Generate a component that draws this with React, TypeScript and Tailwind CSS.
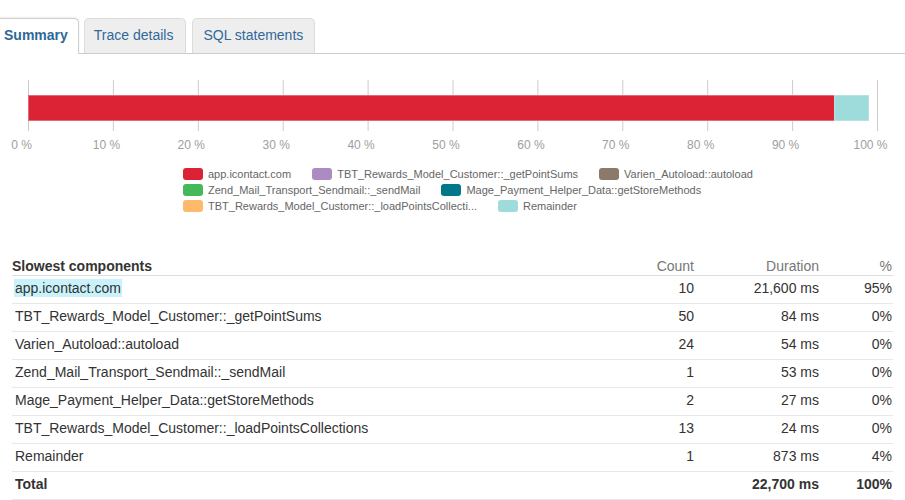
import React from "react";

const ticks = [0, 10, 20, 30, 40, 50, 60, 70, 80, 90, 100];

const legendRows: { color: string; label: string }[][] = [
  [
    { color: "#dc2336", label: "app.icontact.com" },
    { color: "#ab8bc1", label: "TBT_Rewards_Model_Customer::_getPointSums" },
    { color: "#8b7a6a", label: "Varien_Autoload::autoload" },
  ],
  [
    { color: "#45b85a", label: "Zend_Mail_Transport_Sendmail::_sendMail" },
    { color: "#01788a", label: "Mage_Payment_Helper_Data::getStoreMethods" },
  ],
  [
    { color: "#fdb96c", label: "TBT_Rewards_Model_Customer::_loadPointsCollecti..." },
    { color: "#9ddcdb", label: "Remainder" },
  ],
];

const rows = [
  { name: "app.icontact.com", count: "10", dur: "21,600 ms", pct: "95%", hl: true },
  { name: "TBT_Rewards_Model_Customer::_getPointSums", count: "50", dur: "84 ms", pct: "0%" },
  { name: "Varien_Autoload::autoload", count: "24", dur: "54 ms", pct: "0%" },
  { name: "Zend_Mail_Transport_Sendmail::_sendMail", count: "1", dur: "53 ms", pct: "0%" },
  { name: "Mage_Payment_Helper_Data::getStoreMethods", count: "2", dur: "27 ms", pct: "0%" },
  { name: "TBT_Rewards_Model_Customer::_loadPointsCollections", count: "13", dur: "24 ms", pct: "0%" },
  { name: "Remainder", count: "1", dur: "873 ms", pct: "4%" },
];

export default function App() {
  const x0 = 28.5;
  const step = 84.9;
  return (
    <div className="w-[905px] h-[500px] overflow-hidden bg-white font-['Liberation_Sans',Arial,sans-serif] text-[#333]">
      {/* Tabs */}
      <div className="pt-[18px] flex items-end border-b border-[#cccccc] h-[54px]">
        <div className="-mb-px h-[36px] pl-[4px] pr-[10px] pb-[3px] flex items-center bg-white border border-l-0 border-b-0 border-[#cfcfcf] rounded-tr-[5px] shadow-[0_-1px_2px_rgba(0,0,0,0.08)] text-[14px] font-bold text-[#2d6899]">
          Summary
        </div>
        <div className="ml-[5px] h-[35px] pl-[9px] pr-[12px] pb-[2px] flex items-center bg-[#eeeeee] border border-b-0 border-[#dcdcdc] rounded-t-[5px] text-[14px] text-[#30699a]">
          Trace details
        </div>
        <div className="ml-[6px] h-[35px] pl-[10px] pr-[11px] pb-[2px] flex items-center bg-[#eeeeee] border border-b-0 border-[#dcdcdc] rounded-t-[5px] text-[14px] text-[#30699a]">
          SQL statements
        </div>
      </div>

      {/* Chart */}
      <svg width="905" height="106" className="block">
        {ticks.map((t, i) => (
          <line
            key={t}
            x1={x0 + step * i}
            x2={x0 + step * i}
            y1={26}
            y2={77}
            stroke="#cccccc"
            strokeWidth={1}
          />
        ))}
        <rect x={28.5} y={41.5} width={806} height={25} fill="#dc2336" stroke="#e06a76" strokeWidth={1} />
        <rect x={834.5} y={41.5} width={34} height={25} fill="#9ddcdb" stroke="#b5e3e3" strokeWidth={1} />
        {ticks.map((t, i) => (
          <text
            key={t}
            x={x0 + step * i - 7}
            y={95}
            textAnchor="middle"
            fontSize={12}
            fill="#9e9e9e"
            fontFamily="'Liberation Sans', Arial, sans-serif"
          >
            {t} %
          </text>
        ))}
      </svg>

      {/* Legend */}
      <div className="pl-[183px] pt-[6px] flex flex-col text-[11px] text-[#666] leading-[16px]">
        {legendRows.map((r, ri) => (
          <div key={ri} className="flex gap-x-[21px]">
            {r.map((it) => (
              <div key={it.label} className="flex items-center gap-[5px]">
                <span className="inline-block w-[20px] h-[12px] rounded-[3px]" style={{ backgroundColor: it.color }} />
                <span>{it.label}</span>
              </div>
            ))}
          </div>
        ))}
      </div>

      {/* Table */}
      <table className="ml-[12px] mt-[37px] w-[881px] border-collapse text-[14px]">
        <thead>
          <tr className="border-b border-[#dddddd]">
            <th className="h-[24px] align-bottom pb-[1px] leading-[16px] text-left font-bold text-[#333]">Slowest components</th>
            <th className="w-[100px] align-bottom pb-[1px] leading-[16px] text-right font-normal text-[#777]">Count</th>
            <th className="w-[125px] align-bottom pb-[1px] leading-[16px] text-right font-normal text-[#777]">Duration</th>
            <th className="w-[74px] align-bottom pb-[1px] pr-[1px] leading-[16px] text-right font-normal text-[#777]">%</th>
          </tr>
        </thead>
        <tbody>
          {rows.map((r) => (
            <tr key={r.name} className="border-b border-[#e8e8e8] h-[28px]">
              <td className="pl-[2px] pb-[2px]">
                {r.hl ? (
                  <span className="bg-[#c9f2fb] px-px py-[1px]">{r.name}</span>
                ) : (
                  <span className="pl-px">{r.name}</span>
                )}
              </td>
              <td className="text-right pb-[2px]">{r.count}</td>
              <td className="text-right pb-[2px]">{r.dur}</td>
              <td className="text-right pr-[1px] pb-[2px]">{r.pct}</td>
            </tr>
          ))}
          <tr className="border-b border-[#e8e8e8] h-[28px] font-bold">
            <td className="pl-[2px] pb-[2px]"><span className="pl-px">Total</span></td>
            <td className="text-right pb-[2px]"></td>
            <td className="text-right pb-[2px]">22,700 ms</td>
            <td className="text-right pr-[1px] pb-[2px]">100%</td>
          </tr>
        </tbody>
      </table>
    </div>
  );
}
